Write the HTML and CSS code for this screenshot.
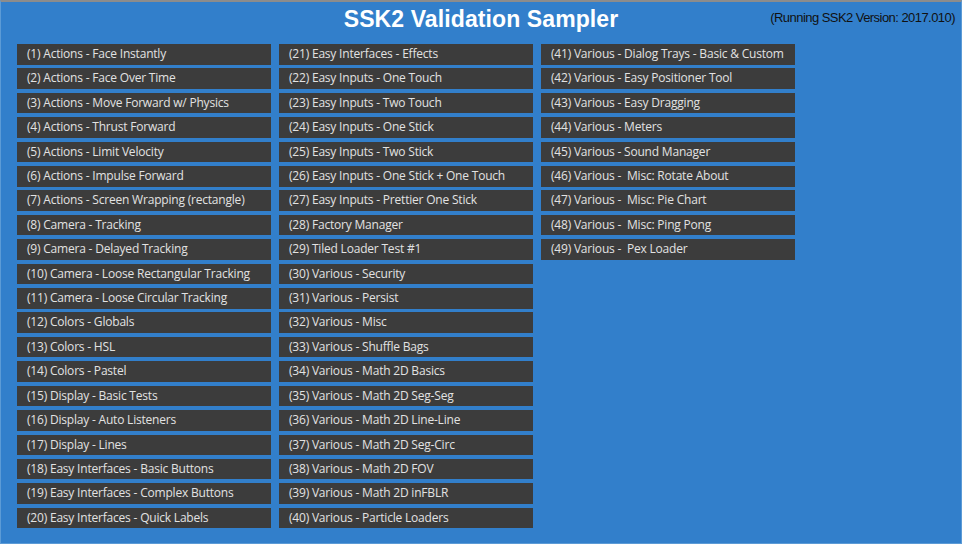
FILE: index.html
```html
<!DOCTYPE html>
<html>
<head>
<meta charset="utf-8">
<link rel="stylesheet" href="styles.css">
</head>
<body>
<div class="frame">
  <header class="top">
    <h1 class="title">SSK2 Validation Sampler</h1>
    <div class="version">(Running SSK2 Version: 2017.010)</div>
  </header>
  <div class="grid">
    <div class="btn">(1) Actions - Face Instantly</div>
    <div class="btn">(2) Actions - Face Over Time</div>
    <div class="btn">(3) Actions - Move Forward w/ Physics</div>
    <div class="btn">(4) Actions - Thrust Forward</div>
    <div class="btn">(5) Actions - Limit Velocity</div>
    <div class="btn">(6) Actions - Impulse Forward</div>
    <div class="btn">(7) Actions - Screen Wrapping (rectangle)</div>
    <div class="btn">(8) Camera - Tracking</div>
    <div class="btn">(9) Camera - Delayed Tracking</div>
    <div class="btn">(10) Camera - Loose Rectangular Tracking</div>
    <div class="btn">(11) Camera - Loose Circular Tracking</div>
    <div class="btn">(12) Colors - Globals</div>
    <div class="btn">(13) Colors - HSL</div>
    <div class="btn">(14) Colors - Pastel</div>
    <div class="btn">(15) Display - Basic Tests</div>
    <div class="btn">(16) Display - Auto Listeners</div>
    <div class="btn">(17) Display - Lines</div>
    <div class="btn">(18) Easy Interfaces - Basic Buttons</div>
    <div class="btn">(19) Easy Interfaces - Complex Buttons</div>
    <div class="btn">(20) Easy Interfaces - Quick Labels</div>
    <div class="btn">(21) Easy Interfaces - Effects</div>
    <div class="btn">(22) Easy Inputs - One Touch</div>
    <div class="btn">(23) Easy Inputs - Two Touch</div>
    <div class="btn">(24) Easy Inputs - One Stick</div>
    <div class="btn">(25) Easy Inputs - Two Stick</div>
    <div class="btn">(26) Easy Inputs - One Stick + One Touch</div>
    <div class="btn">(27) Easy Inputs - Prettier One Stick</div>
    <div class="btn">(28) Factory Manager</div>
    <div class="btn">(29) Tiled Loader Test #1</div>
    <div class="btn">(30) Various - Security</div>
    <div class="btn">(31) Various - Persist</div>
    <div class="btn">(32) Various - Misc</div>
    <div class="btn">(33) Various - Shuffle Bags</div>
    <div class="btn">(34) Various - Math 2D Basics</div>
    <div class="btn">(35) Various - Math 2D Seg-Seg</div>
    <div class="btn">(36) Various - Math 2D Line-Line</div>
    <div class="btn">(37) Various - Math 2D Seg-Circ</div>
    <div class="btn">(38) Various - Math 2D FOV</div>
    <div class="btn">(39) Various - Math 2D inFBLR</div>
    <div class="btn">(40) Various - Particle Loaders</div>
    <div class="btn">(41) Various - Dialog Trays - Basic &amp; Custom</div>
    <div class="btn">(42) Various - Easy Positioner Tool</div>
    <div class="btn">(43) Various - Easy Dragging</div>
    <div class="btn">(44) Various - Meters</div>
    <div class="btn">(45) Various - Sound Manager</div>
    <div class="btn">(46) Various -&nbsp; Misc: Rotate About</div>
    <div class="btn">(47) Various -&nbsp; Misc: Pie Chart</div>
    <div class="btn">(48) Various -&nbsp; Misc: Ping Pong</div>
    <div class="btn">(49) Various -&nbsp; Pex Loader</div>
  </div>
</div>
</body>
</html>
```
FILE: styles.css
```css
html, body {
  margin: 0;
  padding: 0;
  background: #327fcb;
}
.frame {
  width: 962px;
  height: 544px;
  box-sizing: border-box;
  background: #327fcb;
  border-top: 2px solid #8c8c8c;
  border-left: 1px solid #5c9bd6;
  border-right: 1px solid #5c9bd6;
  border-bottom: 1px solid #5c9bd6;
  overflow: hidden;
}
.top {
  position: relative;
  height: 42px;
}
.title {
  margin: 0;
  padding-top: 4px;
  text-align: center;
  font-family: "Liberation Sans", Arial, sans-serif;
  font-weight: bold;
  font-size: 23px;
  letter-spacing: 0.1px;
  line-height: 26px;
  color: #ffffff;
}
.version {
  position: absolute;
  right: 6px;
  top: 8px;
  font-family: "Liberation Sans", Arial, sans-serif;
  font-size: 13px;
  letter-spacing: -0.55px;
  color: #111111;
}
.grid {
  display: grid;
  grid-template-columns: repeat(3, 254px);
  grid-template-rows: repeat(20, 20.5px);
  grid-auto-flow: column;
  column-gap: 8px;
  row-gap: 3.92px;
  padding-left: 16px;
}
.btn {
  background: #3c3c3c;
  color: #e2e2e2;
  font-family: "Open Sans", sans-serif;
  font-size: 12px;
  letter-spacing: -0.2px;
  line-height: 20.5px;
  padding-left: 10px;
  white-space: nowrap;
  overflow: hidden;
}
```
